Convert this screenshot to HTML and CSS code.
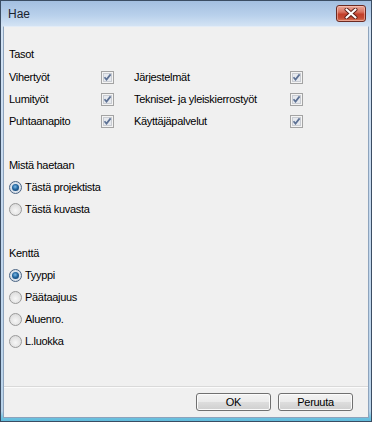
FILE: index.html
```html
<!DOCTYPE html>
<html lang="fi">
<head>
<meta charset="utf-8">
<title>Hae</title>
<link rel="stylesheet" href="styles.css">
</head>
<body>
<div class="window">
  <div class="titlebar">
    <span class="title">Hae</span>
    <div class="close">
      <svg width="14" height="11" viewBox="0 0 14 11">
        <path d="M2.5 1.5 L11.5 9.5 M11.5 1.5 L2.5 9.5" stroke="#5a1d15" stroke-width="4" stroke-linecap="round"/>
        <path d="M2.5 1.5 L11.5 9.5 M11.5 1.5 L2.5 9.5" stroke="#ffffff" stroke-width="2.2" stroke-linecap="round"/>
      </svg>
    </div>
  </div>
  <div class="client">
    <div class="row section">Tasot</div>
    <div class="grid">
      <span class="row">Vihertyöt</span>
      <span class="cb"><svg width="13" height="13" viewBox="0 0 13 13"><rect x="0.5" y="0.5" width="12" height="12" fill="#f4f4f4" stroke="#a3a3a3"/><rect x="2.5" y="2.5" width="8" height="8" fill="#e6e9ee" stroke="#c9ccd2"/><path d="M3.5 6.3 L5.5 8.6 L9.6 3.4" fill="none" stroke="#5d7194" stroke-width="1.7"/></svg></span>
      <span class="row">Järjestelmät</span>
      <span class="cb"><svg width="13" height="13" viewBox="0 0 13 13"><rect x="0.5" y="0.5" width="12" height="12" fill="#f4f4f4" stroke="#a3a3a3"/><rect x="2.5" y="2.5" width="8" height="8" fill="#e6e9ee" stroke="#c9ccd2"/><path d="M3.5 6.3 L5.5 8.6 L9.6 3.4" fill="none" stroke="#5d7194" stroke-width="1.7"/></svg></span>
      <span class="row">Lumityöt</span>
      <span class="cb"><svg width="13" height="13" viewBox="0 0 13 13"><rect x="0.5" y="0.5" width="12" height="12" fill="#f4f4f4" stroke="#a3a3a3"/><rect x="2.5" y="2.5" width="8" height="8" fill="#e6e9ee" stroke="#c9ccd2"/><path d="M3.5 6.3 L5.5 8.6 L9.6 3.4" fill="none" stroke="#5d7194" stroke-width="1.7"/></svg></span>
      <span class="row">Tekniset- ja yleiskierrostyöt</span>
      <span class="cb"><svg width="13" height="13" viewBox="0 0 13 13"><rect x="0.5" y="0.5" width="12" height="12" fill="#f4f4f4" stroke="#a3a3a3"/><rect x="2.5" y="2.5" width="8" height="8" fill="#e6e9ee" stroke="#c9ccd2"/><path d="M3.5 6.3 L5.5 8.6 L9.6 3.4" fill="none" stroke="#5d7194" stroke-width="1.7"/></svg></span>
      <span class="row">Puhtaanapito</span>
      <span class="cb"><svg width="13" height="13" viewBox="0 0 13 13"><rect x="0.5" y="0.5" width="12" height="12" fill="#f4f4f4" stroke="#a3a3a3"/><rect x="2.5" y="2.5" width="8" height="8" fill="#e6e9ee" stroke="#c9ccd2"/><path d="M3.5 6.3 L5.5 8.6 L9.6 3.4" fill="none" stroke="#5d7194" stroke-width="1.7"/></svg></span>
      <span class="row">Käyttäjäpalvelut</span>
      <span class="cb"><svg width="13" height="13" viewBox="0 0 13 13"><rect x="0.5" y="0.5" width="12" height="12" fill="#f4f4f4" stroke="#a3a3a3"/><rect x="2.5" y="2.5" width="8" height="8" fill="#e6e9ee" stroke="#c9ccd2"/><path d="M3.5 6.3 L5.5 8.6 L9.6 3.4" fill="none" stroke="#5d7194" stroke-width="1.7"/></svg></span>
    </div>

    <div class="row section spaced">Mistä haetaan</div>
    <div class="row radio-row"><span class="radio on"></span>Tästä projektista</div>
    <div class="row radio-row"><span class="radio"></span>Tästä kuvasta</div>

    <div class="row section spaced">Kenttä</div>
    <div class="row radio-row"><span class="radio on"></span>Tyyppi</div>
    <div class="row radio-row"><span class="radio"></span>Päätaajuus</div>
    <div class="row radio-row"><span class="radio"></span>Aluenro.</div>
    <div class="row radio-row"><span class="radio"></span>L.luokka</div>

    <div class="footer">
      <button class="btn">OK</button>
      <button class="btn">Peruuta</button>
    </div>
  </div>
</div>
</body>
</html>
```

FILE: styles.css
```css
* { box-sizing: border-box; }

html, body {
  margin: 0;
  padding: 0;
  background: #ffffff;
}

.window {
  width: 372px;
  height: 422px;
  border: 1px solid #3b4d63;
  background: linear-gradient(to bottom, #a3bfe0 0px, #b8d0eb 14px, #d3e3f4 25px, #c4d8ee 200px, #b9d3ea 410px, #6cc1df 417px, #5bb8da 422px);
  display: flex;
  flex-direction: column;
  font-family: "Liberation Sans", Arial, sans-serif;
  font-size: 11px;
  letter-spacing: -0.3px;
  color: #000;
}

.titlebar {
  height: 25px;
  flex: none;
  display: flex;
  align-items: flex-start;
  justify-content: space-between;
  padding: 0 5px 0 7px;
}

.title {
  font-family: "Liberation Sans", Arial, sans-serif;
  font-size: 12px;
  letter-spacing: 0;
  line-height: 26px;
  color: #1b2430;
}

.close {
  margin-top: 4px;
  width: 30px;
  height: 17px;
  border: 1px solid #6b2a22;
  border-radius: 3px;
  background: linear-gradient(to bottom, #e9a89a 0%, #d9725f 40%, #c23f2a 55%, #c54b34 80%, #d97a5c 100%);
  box-shadow: inset 0 0 0 1px rgba(255, 210, 200, 0.5);
  display: flex;
  align-items: center;
  justify-content: center;
}

.close svg { display: block; }

.client {
  flex: 1;
  margin: 0 2px 3px 2px;
  border: 1px solid #8da3bc;
  border-top-color: #e3ecf6;
  background: #f0f0f0;
  display: flex;
  flex-direction: column;
  padding: 16px 0 0 0;
}

.row {
  height: 22px;
  line-height: 22px;
  white-space: nowrap;
}

.section { padding-left: 5px; }

.section.spaced { margin-top: 22px; }

.grid {
  display: grid;
  grid-template-columns: 92px 33px 156px 13px;
  grid-auto-rows: 22px;
  padding-left: 5px;
  margin-top: 1px;
}

.cb {
  display: flex;
  align-items: center;
  height: 22px;
}

.cb svg { display: block; }

.radio-row {
  display: flex;
  align-items: center;
  padding-left: 5px;
  gap: 3px;
}

.radio {
  width: 13px;
  height: 13px;
  border-radius: 50%;
  border: 1px solid #9a9a9a;
  background: radial-gradient(circle at 50% 60%, #f7f7f7 0%, #e4e4e4 55%, #d4d4d4 100%);
  flex: none;
  position: relative;
}

.radio.on {
  border-color: #4c6584;
  background: radial-gradient(circle at 50% 50%, #e9eef4 0%, #cfd9e4 100%);
}

.radio.on::after {
  content: "";
  position: absolute;
  left: 2px;
  top: 2px;
  width: 7px;
  height: 7px;
  border-radius: 50%;
  background: radial-gradient(circle at 45% 40%, #7fbbe8 0%, #22669f 45%, #0f3560 100%);
}

.footer {
  margin-top: auto;
  border-top: 1px solid #d9d9d9;
  box-shadow: inset 0 1px 0 #fbfbfb;
  padding: 6px 15px 6px 0;
  display: flex;
  justify-content: flex-end;
  gap: 7px;
}

.btn {
  width: 75px;
  height: 18px;
  margin: 0;
  padding: 0;
  border: 1px solid #707070;
  border-radius: 3px;
  background: linear-gradient(to bottom, #f3f3f3 0%, #ebebeb 48%, #dddddd 52%, #cfcfcf 100%);
  box-shadow: inset 0 0 0 1px #fbfbfb;
  font-family: "Liberation Sans", Arial, sans-serif;
  font-size: 11px;
  letter-spacing: -0.3px;
  color: #000;
  line-height: 16px;
}
```
